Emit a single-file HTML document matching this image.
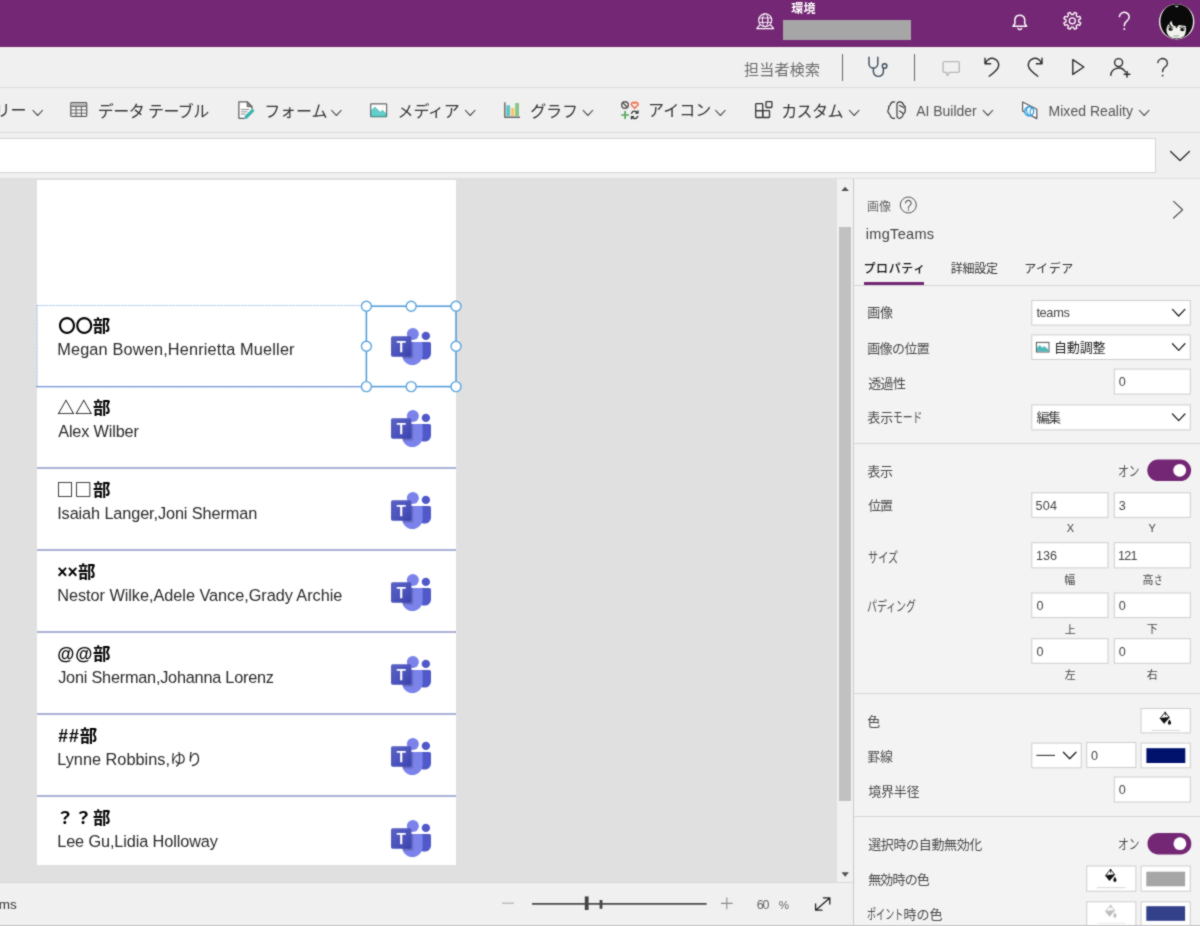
<!DOCTYPE html>
<html lang="ja">
<head>
<meta charset="utf-8">
<title>Power Apps</title>
<style>
*{box-sizing:border-box;margin:0;padding:0}
html,body{width:1200px;height:926px;overflow:hidden;background:#f0f0f0}
body{position:relative;font-family:"Liberation Sans","Noto Sans CJK JP",sans-serif;color:#333;font-size:13px}
.abs{position:absolute}
.t{position:absolute;white-space:nowrap;line-height:1}
.k{display:inline-block;transform-origin:0 50%}
.j{font-family:"Noto Sans CJK JP",sans-serif}
svg{position:absolute;overflow:visible}
#gap{left:-6px;top:133px;width:1212px;height:46px;background:#f0f0f0;z-index:-1}
#app{position:absolute;left:0;top:0;width:1200px;height:926px;filter:url(#soft)}
#top{left:-6px;top:-6px;width:1212px;height:53px;background:#742774}
#cmd{left:-6px;top:47px;width:1212px;height:40px;background:#f0f0f0}
#ribbon{left:-6px;top:87px;width:1212px;height:46px;background:#f0f0f0;border-top:1px solid #dcdcdc;border-bottom:1px solid #dcdcdc}
#fbar{left:-6px;top:138px;width:1162px;height:35px;background:#fff;border:1px solid #d4d4d4}
#stage{left:-6px;top:179px;width:843px;height:704px;background:#e0e0e0}
#topline{left:-6px;top:178.3px;width:1212px;height:1px;background:#dedede}
#screen{left:36.5px;top:180px;width:419.3px;height:685.3px;background:#fff}
#vtrack{left:837px;top:179px;width:16px;height:703px;background:#f1f1f1}
#vthumb{left:838.7px;top:226.5px;width:12.4px;height:574px;background:#c1c1c1}
#status{left:-6px;top:882px;width:859px;height:50px;background:#f0f0f0;border-top:1px solid #d8d8d8;border-bottom:1px solid #c8c8c8}
#panel{left:852.8px;top:179px;width:354px;height:753px;background:#f3f3f3;border-left:1.5px solid #cacaca}
.sep{left:36.5px;width:419.3px;height:1.2px;background:#abb0d7}
.box{position:absolute;background:#fff;border:1px solid #cfcfcf}
.hline{left:854px;width:352px;height:1px;background:#d6d6d6}
.tog{width:43.8px;height:21.6px;border-radius:11px;background:#742774}
.tog i{position:absolute;right:5px;top:4.4px;width:12.8px;height:12.8px;border-radius:50%;background:#fff}
</style>
</head>
<body>
<svg width="0" height="0" style="position:absolute"><filter id="soft" x="0" y="0" width="100%" height="100%" color-interpolation-filters="sRGB"><feConvolveMatrix order="3" kernelMatrix="1 2 1 2 12 2 1 2 1" divisor="24" edgeMode="duplicate" preserveAlpha="true"/></filter></svg>
<div id="app">
<div id="top" class="abs"></div>
<div id="cmd" class="abs"></div>
<div id="ribbon" class="abs"></div>
<div id="fbar" class="abs"></div>
<div id="stage" class="abs"></div>
<div id="topline" class="abs"></div>
<div id="screen" class="abs"></div>
<div id="vtrack" class="abs"></div>
<div id="vthumb" class="abs"></div>
<div id="status" class="abs"></div>
<div id="panel" class="abs"></div>
<div id="gap" class="abs"></div>
<svg class="abs" style="left:0;top:0" width="1200" height="47" viewBox="0 0 1200 47" fill="none" stroke="#fff" stroke-width="1.3" stroke-linecap="round" stroke-linejoin="round">
 <circle cx="765.2" cy="20.2" r="6.5" stroke-width="1.1"/>
 <ellipse cx="765.2" cy="20.2" rx="2.8" ry="6.5" stroke-width="1"/>
 <path d="M759.4,18 h11.6 M759.4,22.4 h11.6" stroke-width="0.9"/>
 <path d="M759.6,25.2 L756.8,28.6 h16.8 L770.8,25.2" stroke-width="1.2"/>
 <path d="M1013,26.2 h13.6 l-1.9,-2.6 v-4.4 a5,5 0 0 0 -9.8,0 v4.4 z" stroke-width="1.5"/>
 <path d="M1018,28.4 a1.9,1.6 0 0 0 3.6,0" stroke-width="1.4"/>
 <path d="M1078.6,21.8 L1080.7,22.9 L1079.8,25.3 L1077.5,24.6 L1076.1,26.0 L1076.8,28.3 L1074.4,29.2 L1073.3,27.1 L1071.3,27.1 L1070.2,29.2 L1067.8,28.3 L1068.5,26.0 L1067.1,24.6 L1064.8,25.3 L1063.9,22.9 L1066.0,21.8 L1066.0,19.8 L1063.9,18.7 L1064.8,16.3 L1067.1,17.0 L1068.5,15.6 L1067.8,13.3 L1070.2,12.4 L1071.3,14.5 L1073.3,14.5 L1074.4,12.4 L1076.8,13.3 L1076.1,15.6 L1077.5,17.0 L1079.8,16.3 L1080.7,18.7 L1078.6,19.8Z" stroke-width="1.3"/>
 <circle cx="1072.3" cy="20.8" r="3" stroke-width="1.3"/>
 <path d="M1119.4,16.6 a4.9,4.6 0 1 1 7.6,4.2 c-1.9,1.4 -2.7,2.3 -2.7,5" stroke-width="1.5"/>
 <circle cx="1124.3" cy="29" r="1" fill="#fff" stroke="none"/>
</svg>
<div class="abs" style="left:783px;top:20px;width:128px;height:19.5px;background:#a6a6a6"></div>
<svg class="abs" style="left:1158.9px;top:3.6px" width="35.4" height="35.4" viewBox="0 0 36 36">
 <defs><clipPath id="av"><circle cx="18" cy="18" r="17.8"/></clipPath></defs>
 <circle cx="18" cy="18" r="18" fill="#e4e4e4"/>
 <g clip-path="url(#av)">
  <rect width="36" height="36" fill="#f1f1ee"/>
  <ellipse cx="18" cy="17.6" rx="16.6" ry="18.2" fill="#0a0a0a"/>
  <path d="M7.6,26 C7.6,23 9,21 11,19.6 L12.4,16.8 L14.2,21.6 L17,23 L19.4,21.4 L27.2,22.4 C28,25 27.6,29 26,32 C23,36 13,36 9.6,32 C8,30 7.6,28 7.6,26Z" fill="#f3f3ee"/>
  <path d="M10.6,20 l1.6,4 M19.5,21 l-2.2,3.4" stroke="#0a0a0a" stroke-width="1.2"/>
  <path d="M8.6,23.6 q3,-1.2 6,0.2 M21,23.8 q3,-1 6,0.6" stroke="#333" stroke-width="0.9" fill="none"/>
  <ellipse cx="11.8" cy="25.6" rx="2.1" ry="1.6" fill="#0c0c0c"/>
  <ellipse cx="23.8" cy="26" rx="2.3" ry="1.6" fill="#0c0c0c"/>
  <circle cx="12.6" cy="25.1" r="0.5" fill="#fff"/><circle cx="24.7" cy="25.5" r="0.5" fill="#fff"/>
  <path d="M14.6,32.3 q2.8,1.3 5.8,-0.2" stroke="#888" stroke-width="0.9" fill="none"/>
  <path d="M16.8,2 q1.2,1.6 2.4,0" stroke="#f1f1ee" stroke-width="1.2" fill="none"/>
 </g>
</svg>

<div class="abs" style="left:842px;top:54px;width:1px;height:27px;background:#666"></div>
<div class="abs" style="left:914px;top:54px;width:1px;height:27px;background:#666"></div>
<svg class="abs" style="left:0;top:47px" width="1200" height="40" viewBox="0 47 1200 40" fill="none" stroke="#2b2b2b" stroke-width="1.4" stroke-linecap="round" stroke-linejoin="round">
 <path d="M869,57.2 v6.2 a4.4,4.6 0 0 0 8.8,0 v-6.2 M873.4,68 v3.4 a5,5 0 0 0 10,0 v-3" stroke="#3a4a5a"/>
 <circle cx="884.6" cy="66" r="2.3" stroke="#3a4a5a"/>
 <path d="M944.6,61.6 h13.2 a1.5,1.5 0 0 1 1.5,1.5 v7.800 a1.5,1.5 0 0 1 -1.5,1.5 h-7.800 l-3,3 v-3 h-2.400 a1.5,1.5 0 0 1 -1.5,-1.5 v-7.800 a1.5,1.5 0 0 1 1.5,-1.5 z" stroke="#b8b8b8" stroke-width="1.4"/>
 <path d="M985,58.2 v5.6 h5.6 M985.6,63.4 a6.6,6.6 0 0 1 12.9,3 c-0.6,3.4 -4.6,6.4 -9.3,9.8"/>
 <path d="M1042,58.2 v5.6 h-5.6 M1041.4,63.4 a6.6,6.6 0 0 0 -12.9,3 c0.6,3.4 4.6,6.4 9.3,9.8"/>
 <path d="M1072.8,59.6 L1083.8,67 L1072.8,74.4 Z"/>
 <circle cx="1118.6" cy="62.6" r="4"/>
 <path d="M1110.8,75.4 a7.8,7.6 0 0 1 14.6,-3.4"/>
 <path d="M1127,71.4 v5.6 M1124.2,74.2 h5.6" stroke-width="1.5"/>
 <path d="M1157.8,62.6 a4.8,4.5 0 1 1 7.4,4.2 c-1.9,1.4 -2.6,2.3 -2.6,4.9" stroke-width="1.3"/>
 <circle cx="1162.6" cy="75.6" r="0.95" fill="#2b2b2b" stroke="none"/>
</svg>

<svg class="abs" style="left:0;top:88px" width="1200" height="90" viewBox="0 88 1200 90" fill="none" stroke-linecap="round" stroke-linejoin="round">
 <path d="M32.9,110.4 l4.8,5.1 l4.8,-5.1" stroke="#555" stroke-width="1.1"/><path d="M331.6,110.4 l4.8,5.1 l4.8,-5.1" stroke="#555" stroke-width="1.1"/><path d="M465.40000000000003,110.4 l4.8,5.1 l4.8,-5.1" stroke="#555" stroke-width="1.1"/><path d="M583.1,110.4 l4.8,5.1 l4.8,-5.1" stroke="#555" stroke-width="1.1"/><path d="M715.6,110.4 l4.8,5.1 l4.8,-5.1" stroke="#555" stroke-width="1.1"/><path d="M849.4,110.4 l4.8,5.1 l4.8,-5.1" stroke="#555" stroke-width="1.1"/><path d="M983.1,110.4 l4.8,5.1 l4.8,-5.1" stroke="#555" stroke-width="1.1"/><path d="M1139.3999999999999,110.4 l4.8,5.1 l4.8,-5.1" stroke="#555" stroke-width="1.1"/>
 <g stroke="#5a5a5a" stroke-width="1.2" stroke-linecap="butt">
  <rect x="70.8" y="102.7" width="15.9" height="13.7" rx="0.8" fill="#fff"/>
  <rect x="71.4" y="103.3" width="14.7" height="3.2" fill="#b4b4b4" stroke="none"/>
  <path d="M70.8,106.6h15.9 M70.8,109.9h15.9 M70.8,113.2h15.9 M76.1,106.6v9.8 M81.4,106.6v9.8" stroke-width="1"/>
 </g>
 <g stroke="#5e5e5e" stroke-width="1.25">
  <path d="M244.4,118.3 h-5.5 v-16.4 h8.3 l4.7,4.8 v2" fill="#fff"/>
  <path d="M247.2,102 v4.7 h4.6 z" fill="#8a8a8a" stroke-width="1"/>
  <path d="M241.4,109.5h7.2 M241.4,111.8h5.6 M241.4,114.1h3.8" stroke="#8c8c8c" stroke-width="1"/>
  <path d="M246.2,117 l6.3,-6.3" stroke="#3bb3ae" stroke-width="3.3"/>
 </g>
 <rect x="370.7" y="103.9" width="15.9" height="12.8" rx="0.6" fill="#fff" stroke="#666" stroke-width="1.2"/>
 <path d="M371.3,116.1 v-5.4 l3.6,-3.5 5.3,5.2 2.3,-2.2 3.5,3.5 v2.4 z" fill="#63cfcc" stroke="#2fa8a4" stroke-width="0.7"/>
 <circle cx="383.4" cy="107.3" r="0.8" fill="#fbd38e"/>
 <rect x="506.3" y="105.3" width="3.8" height="10.7" rx="0.5" fill="#5fc6c4" stroke="none"/>
 <rect x="511" y="108" width="3.3" height="8" rx="0.5" fill="#f9c56a" stroke="none"/>
 <rect x="515.2" y="103.1" width="3.8" height="12.9" rx="0.5" fill="#86c688" stroke="none"/>
 <path d="M504.8,102.2 v15 h15.2" stroke="#666" stroke-width="1.4" stroke-linecap="butt"/>
 <circle cx="625" cy="105" r="3.3" stroke="#555" stroke-width="1.4"/>
 <path d="M622.8,102.8 l4.4,4.4" stroke="#555" stroke-width="1.4"/>
 <path d="M634.7,108.3 l-3,-3 a1.8,1.8 0 0 1 3,-2 a1.8,1.8 0 0 1 3,2 z" stroke="#f06e4a" stroke-width="1.5"/>
 <path d="M621.2,115h7.8 M625.1,111.1v7.8" stroke="#52a85a" stroke-width="1.7" stroke-linecap="butt"/>
 <path d="M631.6,113.4 a3.2,3.2 0 0 1 5.6,-1 M637.8,116.3 a3.2,3.2 0 0 1 -5.6,1 M638,110.9 v2.1 h-2.1 M631.4,118.8 v-2.1 h2.1" stroke="#333" stroke-width="1.3"/>
 <g stroke="#333" stroke-width="1.3" stroke-linejoin="round" stroke-linecap="butt">
  <rect x="755.7" y="103.7" width="7" height="6.9" rx="0.7"/>
  <rect x="755.7" y="110.6" width="7" height="6.9" rx="0.7"/>
  <rect x="762.7" y="110.6" width="6.8" height="6.9" rx="0.7"/>
  <rect x="766" y="101.7" width="5.9" height="5.8" rx="0.7"/>
 </g>
 <g stroke="#3a3a3a" stroke-width="1.2">
  <path d="M894.6,101.9 c-2.4,-0.4 -4,1 -4.4,3 c-1.6,1 -1.8,2.6 -1.4,4 c-1.4,1.4 -1.2,3.6 0.4,4.8 c0.6,0.4 0.8,1 1,2 c0.6,2 2.4,3 4.4,2.6"/>
  <path d="M897,104.4 c0,-1.6 1.2,-2.6 2.6,-2.5 c2,0.2 3.6,1.4 4,3.2 c1.6,1 1.9,2.7 1.4,4.2 c0.6,1.8 0,3.6 -1.6,4.6 c-0.4,2.2 -1.9,4 -4,4.4 c-1.4,0.1 -2.4,-1 -2.4,-2.4 z"/>
  <path d="M899.6,105.5 l4,2 M899.6,111 l3.6,2.4"/>
 </g>
 <path d="M1022.6,102 L1036.8,109.2 V118.6 L1022.6,111 Z" fill="#fff" stroke="#595959" stroke-width="1.2"/>
 <circle cx="1029.2" cy="111.2" r="4.5" stroke="#2f9bdb" stroke-width="1.4" fill="#fff"/>
 <path d="M1027.8,107 c-1.6,2.4 -1.4,6 1,8.6 M1031.8,107.6 c-1.8,2.2 -2.2,5.4 -1,8" stroke="#2f9bdb" stroke-width="1.2"/>
 <path d="M1170.6,151.4 l9.4,9.2 9.4,-9.2" stroke="#333" stroke-width="1.4"/>
</svg>

<svg width="0" height="0" style="position:absolute">
 <defs>
  <linearGradient id="tg" x1="0" y1="0" x2="1" y2="1"><stop offset="0" stop-color="#5a62c3"/><stop offset="0.5" stop-color="#4d55bd"/><stop offset="1" stop-color="#3940ab"/></linearGradient>
  <symbol id="teams" viewBox="0 0 2228.833 2073.333">
   <path fill="#5059C9" d="M1554.6,777.5h575.7c54.4,0,98.5,44.1,98.5,98.5v524.4c0,199.9-162,361.9-362,361.9h-1.7c-199.9,0-362-162-362-361.9V829C1503.2,800.5,1526.2,777.5,1554.6,777.5z"/>
   <circle fill="#5059C9" cx="1943.75" cy="440.6" r="233.25"/>
   <circle fill="#7B83EB" cx="1218.1" cy="336.9" r="336.9"/>
   <path fill="#7B83EB" d="M1667.3,777.5H717c-53.7,1.3-96.3,45.9-95,99.7v598.1c-7.5,322.5,247.7,590.2,570.2,598c322.5-7.9,577.7-275.5,570.2-598V877.2C1763.6,823.4,1721.1,778.8,1667.3,777.5z"/>
   <path opacity="0.16" d="M1244,777.5v838c0,52-42,95-95,95H668c-30-72-46-150-46-235V877c-1-54,41-98,95-99.5z"/>
   <rect fill="url(#tg)" x="0" y="466.5" width="1140.3" height="1140.3" rx="95"/>
   <path fill="#FFF" d="M820.2,828.2H630.2v517.3H509.2V828.2H320.1V727.8h500.1V828.2z"/>
  </symbol>
 </defs>
</svg>
<svg class="abs" style="left:391px;top:328.1px" width="40" height="37.2"><use href="#teams" width="40" height="37.2"/></svg>
<svg class="abs" style="left:391px;top:410.1px" width="40" height="37.2"><use href="#teams" width="40" height="37.2"/></svg>
<svg class="abs" style="left:391px;top:492.1px" width="40" height="37.2"><use href="#teams" width="40" height="37.2"/></svg>
<svg class="abs" style="left:391px;top:574.1px" width="40" height="37.2"><use href="#teams" width="40" height="37.2"/></svg>
<svg class="abs" style="left:391px;top:656.1px" width="40" height="37.2"><use href="#teams" width="40" height="37.2"/></svg>
<svg class="abs" style="left:391px;top:738.1px" width="40" height="37.2"><use href="#teams" width="40" height="37.2"/></svg>
<svg class="abs" style="left:391px;top:820.1px" width="40" height="37.2"><use href="#teams" width="40" height="37.2"/></svg>
<div class="abs sep" style="top:467.4px"></div>
<div class="abs sep" style="top:549.4px"></div>
<div class="abs sep" style="top:631.4px"></div>
<div class="abs sep" style="top:713.4px"></div>
<div class="abs sep" style="top:795.4px"></div>

<svg class="abs" style="left:0;top:290px" width="480" height="110" viewBox="0 290 480 110" fill="none">
 <path d="M36.5,386.6 H366" stroke="#a9afd6" stroke-width="1.3"/>
 <path d="M37,305.5 H366" stroke="#7fb0e6" stroke-width="1" stroke-dasharray="1.2 1.2"/>
 <path d="M37.2,305.5 V386.5" stroke="#7fb0e6" stroke-width="1" stroke-dasharray="1.2 1.2"/>
 <path d="M36.5,386.7 H366" stroke="#5f93dc" stroke-width="1.2" stroke-dasharray="1.6 0.8"/>
 <rect x="366.4" y="306.2" width="89.6" height="80.4" stroke="#4a98d9" stroke-width="1.5"/>
 <g fill="#fff" stroke="#5aa5e0" stroke-width="1.4">
  <circle cx="366.4" cy="306.3" r="5"/><circle cx="411.2" cy="306.3" r="5"/><circle cx="456" cy="306.3" r="5"/>
  <circle cx="366.4" cy="346.3" r="5"/><circle cx="456" cy="346.3" r="5"/>
  <circle cx="366.4" cy="386.6" r="5"/><circle cx="411.2" cy="386.6" r="5"/><circle cx="456" cy="386.6" r="5"/>
 </g>
</svg>
<svg class="abs" style="left:480px;top:883px" width="373" height="42" viewBox="480 883 373 42" fill="none">
 <path d="M502,903.2 h12" stroke="#b4b4b4" stroke-width="1.3"/>
 <path d="M532,903.8 H706.6" stroke="#4a4a4a" stroke-width="1.7"/>
 <rect x="584.8" y="896.4" width="3.8" height="13.6" fill="#444"/>
 <rect x="599.6" y="900" width="2.8" height="8.8" fill="#444"/>
 <path d="M721,903.4 h11.6 M726.8,897.6 v11.6" stroke="#8a8a8a" stroke-width="1.1"/>
 <path d="M816,910 L829.4,898.2 M823.4,897.8 h6.4 v6.2 M815.6,904 v6.2 h6.4" stroke="#222" stroke-width="1.3" stroke-linecap="round" stroke-linejoin="round"/>
 <path d="M841.5,872.2 h7.400 l-3.700,4.600 z" fill="#505050"/>
 <path d="M841.3,191.1 h7.600 l-3.800,-4.400 z" fill="#505050"/>
</svg>
<div class="abs" style="left:864.3px;top:281.8px;width:59.6px;height:2.9px;background:#742774"></div>
<div class="abs hline" style="top:285px"></div>
<div class="abs hline" style="top:442.6px"></div>
<div class="abs hline" style="top:692.6px"></div>
<div class="abs hline" style="top:815.8px"></div>
<svg class="abs" style="left:0;top:0" width="1200" height="926" viewBox="0 0 1200 926" fill="none"><g fill="#fff" stroke="#cdcdcd" stroke-width="1"><rect x="1031.8" y="300.5" width="158.5" height="24.6"/>
<rect x="1031.8" y="334.9" width="158.5" height="24.6"/>
<rect x="1114.3" y="369.1" width="76.0" height="25.0"/>
<rect x="1031.8" y="404.9" width="158.5" height="25.0"/>
<rect x="1031.8" y="492.8" width="76.2" height="24.6"/>
<rect x="1114.3" y="492.8" width="76.0" height="24.6"/>
<rect x="1031.8" y="542.7" width="76.2" height="25.2"/>
<rect x="1114.3" y="542.7" width="76.0" height="25.2"/>
<rect x="1031.8" y="593.0" width="76.2" height="24.6"/>
<rect x="1114.3" y="593.0" width="76.0" height="24.6"/>
<rect x="1031.8" y="638.7" width="76.2" height="24.6"/>
<rect x="1114.3" y="638.7" width="76.0" height="24.6"/>
<rect x="1141.1" y="708.5" width="49.2" height="24.4"/>
<rect x="1031.8" y="743.1" width="49.4" height="24.7"/>
<rect x="1086.7" y="742.5" width="49.2" height="25.0"/>
<rect x="1141.1" y="743.1" width="49.2" height="24.7"/>
<rect x="1114.3" y="777.0" width="76.0" height="25.0"/>
<rect x="1086.7" y="866.0" width="49.2" height="25.2"/>
<rect x="1141.1" y="866.0" width="49.2" height="25.2"/>
<rect x="1086.7" y="901.8" width="49.2" height="25.2"/>
<rect x="1141.1" y="901.8" width="49.2" height="25.2"/></g><circle cx="908.3" cy="205" r="8" stroke="#555" stroke-width="1"/>
<path d="M905.6,203 a2.8,2.7 0 1 1 4.3,2.4 c-1.1,0.8 -1.5,1.3 -1.5,2.7" stroke="#555" stroke-width="1.1" stroke-linecap="round"/><circle cx="908.4" cy="209.9" r="0.75" fill="#555"/>
<path d="M1173.6,201.4 l9,8.3 -9,8.3" stroke="#555" stroke-width="1.2" stroke-linecap="round" stroke-linejoin="round"/>
<path d="M1172.5,309.4 l6.2,6.6 l6.2,-6.6" stroke="#222" stroke-width="1.3" stroke-linecap="round" stroke-linejoin="round"/>
<path d="M1172.5,343.79999999999995 l6.2,6.6 l6.2,-6.6" stroke="#222" stroke-width="1.3" stroke-linecap="round" stroke-linejoin="round"/>
<rect x="1036.4" y="342.4" width="12.6" height="9.6" fill="#fff" stroke="#555" stroke-width="1"/><path d="M1036.9,351.5 v-3.4 l2.8,-3 2.6,2.6 1.8,-1.6 4.4,3.6 v1.8 z" fill="#4fb8bb"/>
<path d="M1172.5,414.0 l6.2,6.6 l6.2,-6.6" stroke="#222" stroke-width="1.3" stroke-linecap="round" stroke-linejoin="round"/>
<rect x="1147.3" y="459.5" width="43.8" height="21.6" rx="10.8" fill="#742774"/><circle cx="1179.7" cy="470.3" r="6.4" fill="#fff"/>
<g transform="translate(1165.6,718.4)" stroke-linejoin="round"><path d="M-5.3,-0.1 L-0.5,-6.300 L3.700,-0.9" stroke="#111" stroke-width="0.9" fill="#fff"/><path d="M-0.3,-6.700 v3.800" stroke="#111" stroke-width="1"/><path d="M-5.700,-0.200 L3.900,-1.100 L-1.500,5.100 Z" fill="#111" stroke="#111" stroke-width="0.5"/><path d="M3.900,1.200 c1,1.600 1.600,2.600 1.600,3.500 a1.600,1.600 0 0 1 -3.200,0 c0,-0.9 0.600,-1.900 1.600,-3.500z" fill="#111"/></g><rect x="1151.6" y="729.8" width="28.4" height="1.200" fill="#dcdcdc"/>
<path d="M1036.4,755.4 h18.6" stroke="#333" stroke-width="1.1"/><path d="M1063.4,752.2 l6.3,6.6 l6.3,-6.6" stroke="#222" stroke-width="1.3" stroke-linecap="round" stroke-linejoin="round"/>
<rect x="1146.4" y="748.2" width="38.9" height="14.8" fill="#00126b"/>
<rect x="1147.5" y="832.9" width="43.8" height="21.6" rx="10.8" fill="#742774"/><circle cx="1179.9" cy="843.7" r="6.4" fill="#fff"/>
<g transform="translate(1111,875.6)" stroke-linejoin="round"><path d="M-5.3,-0.1 L-0.5,-6.300 L3.700,-0.9" stroke="#111" stroke-width="0.9" fill="#fff"/><path d="M-0.3,-6.700 v3.800" stroke="#111" stroke-width="1"/><path d="M-5.700,-0.200 L3.900,-1.100 L-1.500,5.100 Z" fill="#111" stroke="#111" stroke-width="0.5"/><path d="M3.900,1.200 c1,1.600 1.600,2.600 1.600,3.500 a1.600,1.600 0 0 1 -3.200,0 c0,-0.9 0.600,-1.900 1.600,-3.500z" fill="#111"/></g><rect x="1097.0" y="887.0" width="28.4" height="1.200" fill="#dcdcdc"/>
<rect x="1146.3" y="871.7" width="38.8" height="14.6" fill="#a6a6a6"/>
<g transform="translate(1111,911.4)" stroke-linejoin="round"><path d="M-5.3,-0.1 L-0.5,-6.300 L3.700,-0.9" stroke="#bdbdbd" stroke-width="0.9" fill="#fff"/><path d="M-0.3,-6.700 v3.800" stroke="#bdbdbd" stroke-width="1"/><path d="M-5.700,-0.200 L3.900,-1.100 L-1.500,5.100 Z" fill="#bdbdbd" stroke="#bdbdbd" stroke-width="0.5"/><path d="M3.900,1.200 c1,1.600 1.600,2.600 1.600,3.500 a1.600,1.600 0 0 1 -3.200,0 c0,-0.9 0.600,-1.900 1.600,-3.500z" fill="#bdbdbd"/></g><rect x="1097.0" y="922.8" width="28.4" height="1.200" fill="#ededed"/>
<rect x="1146.3" y="906.2" width="38.8" height="14.6" fill="#33408a"/></svg><div class="t" style="left:791.3px;top:2.8px;font-size:12px;font-weight:bold;letter-spacing:0.1px;color:#fff">環境</div>
<div class="t" style="left:744px;top:61.5px;font-size:15px;letter-spacing:0.25px;color:#6a6a6a">担当者検索</div>
<div class="t" style="left:-5.6px;top:103.3px;font-size:16px;color:#333">リー</div>
<div class="t" style="left:97.8px;top:104.3px;font-size:16px;letter-spacing:-0.57px;color:#333">データ テーブル</div>
<div class="t" style="left:264.2px;top:103.8px;font-size:16px;letter-spacing:-0.07px;color:#333">フォーム</div>
<div class="t" style="left:397.6px;top:104.3px;font-size:16px;letter-spacing:-0.2px;color:#333">メディア</div>
<div class="t" style="left:530.2px;top:103.8px;font-size:16px;letter-spacing:-0.1px;color:#333">グラフ</div>
<div class="t" style="left:648px;top:103.3px;font-size:16px;color:#333">アイコン</div>
<div class="t" style="left:781.2px;top:103.8px;font-size:16px;letter-spacing:-0.57px;color:#333">カスタム</div>
<div class="t" style="left:916.2px;top:103.6px;font-size:14px;letter-spacing:-0.02px;color:#555">AI Builder</div>
<div class="t" style="left:1048.5px;top:103.6px;font-size:14px;letter-spacing:0.04px;color:#555">Mixed Reality</div>
<div class="t" style="left:58.3px;top:315.8px;font-size:17.5px;font-weight:bold;letter-spacing:-0.3px;color:#000"><span class="j">〇〇部</span></div>
<div class="t" style="left:57.2px;top:341.3px;font-size:16.3px;letter-spacing:0.17px;color:#2a2a2a">Megan Bowen,Henrietta Mueller</div>
<div class="t" style="left:57.3px;top:397.8px;font-size:17.5px;font-weight:bold;letter-spacing:0.3px;color:#000"><span class="j">△△部</span></div>
<div class="t" style="left:58.2px;top:423.3px;font-size:16.3px;letter-spacing:-0.16px;color:#2a2a2a">Alex Wilber</div>
<div class="t" style="left:56.3px;top:479.8px;font-size:17.5px;font-weight:bold;letter-spacing:0.8px;color:#000"><span class="j">□□部</span></div>
<div class="t" style="left:57.2px;top:505.3px;font-size:16.3px;letter-spacing:-0.11px;color:#2a2a2a">Isaiah Langer,Joni Sherman</div>
<div class="t" style="left:57.3px;top:563.8px;font-size:17.5px;font-weight:bold;letter-spacing:0.1px;color:#000">××部</div>
<div class="t" style="left:57.2px;top:587.3px;font-size:16.3px;letter-spacing:-0.04px;color:#2a2a2a">Nestor Wilke,Adele Vance,Grady Archie</div>
<div class="t" style="left:57.3px;top:645.8px;font-size:17.5px;font-weight:bold;letter-spacing:0.8px;color:#000">@@部</div>
<div class="t" style="left:58.2px;top:669.3px;font-size:16.3px;letter-spacing:-0.23px;color:#2a2a2a">Joni Sherman,Johanna Lorenz</div>
<div class="t" style="left:58.3px;top:727.8px;font-size:17.5px;font-weight:bold;letter-spacing:1.0px;color:#000">##部</div>
<div class="t" style="left:57.2px;top:751.3px;font-size:16.3px;letter-spacing:0.02px;color:#2a2a2a">Lynne Robbins,ゆり</div>
<div class="t" style="left:56.3px;top:807.8px;font-size:17.5px;font-weight:bold;letter-spacing:0.8px;color:#000"><span class="j">？？部</span></div>
<div class="t" style="left:57.2px;top:833.3px;font-size:16.3px;letter-spacing:-0.11px;color:#2a2a2a">Lee Gu,Lidia Holloway</div>
<div class="t" style="left:-1.3px;top:897.7px;font-size:13.5px;color:#333">ms</div>
<div class="t" style="left:756.8px;top:899.4px;font-size:12.5px;letter-spacing:-1.3px;color:#666">60</div>
<div class="t" style="left:778.7px;top:899.9px;font-size:11.5px;color:#666">%</div>
<div class="t" style="left:867.1px;top:200.5px;font-size:12px;letter-spacing:-0.1px;color:#666">画像</div>
<div class="t" style="left:865.8px;top:227.2px;font-size:14.5px;letter-spacing:0.31px;color:#444">imgTeams</div>
<div class="t" style="left:863.4px;top:262.6px;font-size:12px;font-weight:500;letter-spacing:0.65px;color:#111">プロパティ</div>
<div class="t" style="left:950.8px;top:262.6px;font-size:12px;letter-spacing:-0.27px;color:#333">詳細設定</div>
<div class="t" style="left:1024.2px;top:262.6px;font-size:12px;letter-spacing:0.53px;color:#333">アイデア</div>
<div class="t" style="left:867.2px;top:306.4px;font-size:13px;letter-spacing:-0.1px;color:#4a4a4a">画像</div>
<div class="t" style="left:867.2px;top:342.0px;font-size:13px;letter-spacing:-0.6px;color:#4a4a4a">画像の位置</div>
<div class="t" style="left:868.2px;top:376.9px;font-size:13px;letter-spacing:-0.6px;color:#4a4a4a">透過性</div>
<div class="t" style="left:867.2px;top:411.3px;font-size:13px;color:#4a4a4a">表示<span class="k" style="transform:scale(0.750,1.06);width:29.2px">モード</span></div>
<div class="t" style="left:867.2px;top:465.0px;font-size:13px;letter-spacing:-0.1px;color:#4a4a4a">表示</div>
<div class="t" style="left:868.2px;top:499.4px;font-size:13px;letter-spacing:-1.1px;color:#4a4a4a">位置</div>
<div class="t" style="left:868.2px;top:551.0px;font-size:13px;color:#4a4a4a"><span class="k" style="transform:scale(0.783,1.06);width:30.5px">サイズ</span></div>
<div class="t" style="left:867.2px;top:600.4px;font-size:13px;color:#4a4a4a"><span class="k" style="transform:scale(0.763,1.06);width:49.6px">パディング</span></div>
<div class="t" style="left:867.2px;top:715.0px;font-size:13px;color:#4a4a4a">色</div>
<div class="t" style="left:867.2px;top:749.6px;font-size:13px;letter-spacing:-0.1px;color:#4a4a4a">罫線</div>
<div class="t" style="left:868.2px;top:784.6px;font-size:13px;letter-spacing:-0.27px;color:#4a4a4a">境界半径</div>
<div class="t" style="left:868.2px;top:838.2px;font-size:13px;letter-spacing:-0.36px;color:#4a4a4a">選択時の自動無効化</div>
<div class="t" style="left:868.2px;top:873.0px;font-size:13px;letter-spacing:-0.85px;color:#4a4a4a">無効時の色</div>
<div class="t" style="left:867.2px;top:907.8px;font-size:13px;color:#4a4a4a"><span class="k" style="transform:scale(0.700,1.06);width:36.4px">ポイント</span>時の色</div>
<div class="t" style="left:1036.4px;top:306.8px;font-size:12.8px;letter-spacing:-0.35px;color:#444">teams</div>
<div class="t" style="left:1054px;top:340.8px;font-size:13px;letter-spacing:-0.13px;color:#222">自動調整</div>
<div class="t" style="left:1118.7px;top:376.3px;font-size:12.6px;color:#444">0</div>
<div class="t" style="left:1036.4px;top:410.9px;font-size:13px;letter-spacing:-1.4px;color:#333">編集</div>
<div class="t" style="left:1117.8px;top:464.6px;font-size:13px;color:#4a4a4a"><span class="k" style="transform:scale(0.822,1.06);width:21.4px">オン</span></div>
<div class="t" style="left:1117.8px;top:838.0px;font-size:13px;color:#4a4a4a"><span class="k" style="transform:scale(0.822,1.06);width:21.4px">オン</span></div>
<div class="t" style="left:1035.6px;top:499.9px;font-size:12.6px;letter-spacing:0.2px;color:#444">504</div>
<div class="t" style="left:1118.7px;top:499.9px;font-size:12.6px;color:#444">3</div>
<div class="t" style="left:1036px;top:550.1px;font-size:12.6px;color:#444">136</div>
<div class="t" style="left:1118px;top:550.1px;font-size:12.6px;letter-spacing:-0.7px;color:#444">121</div>
<div class="t" style="left:1036.6px;top:599.7px;font-size:12.6px;color:#444">0</div>
<div class="t" style="left:1118.7px;top:599.7px;font-size:12.6px;color:#444">0</div>
<div class="t" style="left:1036.6px;top:645.5px;font-size:12.6px;color:#444">0</div>
<div class="t" style="left:1118.7px;top:645.5px;font-size:12.6px;color:#444">0</div>
<div class="t" style="left:1091px;top:749.9px;font-size:12.6px;color:#444">0</div>
<div class="t" style="left:1118.7px;top:784.1px;font-size:12.6px;color:#444">0</div>
<div class="t" style="left:1066.8px;top:523.1px;font-size:11px;color:#444">X</div>
<div class="t" style="left:1148.5px;top:523.1px;font-size:11px;color:#444">Y</div>
<div class="t" style="left:1064.3px;top:574.6px;font-size:11px;color:#444">幅</div>
<div class="t" style="left:1142.6px;top:574.6px;font-size:11px;color:#444">高<span class="k" style="transform:scale(0.778,1.06);width:8.6px">さ</span></div>
<div class="t" style="left:1064.8px;top:624.5px;font-size:11px;color:#444">上</div>
<div class="t" style="left:1146.8px;top:623.5px;font-size:11px;color:#444">下</div>
<div class="t" style="left:1064.8px;top:669.9px;font-size:11px;color:#444">左</div>
<div class="t" style="left:1146.8px;top:669.9px;font-size:11px;color:#444">右</div>
<div class="abs" style="left:-6px;top:925px;width:1212px;height:7px;background:#c8c8c8"></div>
</div>
</body>
</html>
